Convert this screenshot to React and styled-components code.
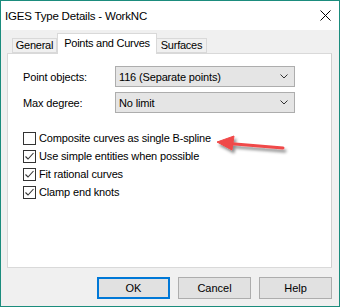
import React from 'react';
import styled, { createGlobalStyle } from 'styled-components';

//----------------Styling-------------------------//

const Global = createGlobalStyle`
  body {
    margin: 0;
    font-family: "Liberation Sans", Arial, sans-serif;
    font-size: 11px;
    color: #000;
  }
`

const Window = styled.div`
  position: relative;
  width: 340px;
  height: 307px;
  box-sizing: border-box;
  border: 1px solid #1b8c7d;
  background: #f0f0f0;
  display: flex;
  flex-direction: column;
`

const TitleBar = styled.div`
  height: 29px;
  background: #fff;
  display: flex;
  align-items: center;
  justify-content: space-between;
  padding: 0 8px 0 4px;
  font-size: 11.5px;
  letter-spacing: -0.2px;
`

const Body = styled.div`
  flex: 1;
  display: flex;
  flex-direction: column;
  padding: 3px 7px 0 6px;
`

const TabStrip = styled.div`
  display: flex;
  align-items: flex-end;
  height: 20px;
  padding-left: 5px;
  position: relative;
  z-index: 1;
`

const Tab = styled.div`
  width: ${p => p.w}px;
  height: ${p => (p.active ? 21 : 15)}px;
  box-sizing: border-box;
  border: 1px solid #d9d9d9;
  border-bottom: ${p => (p.active ? 'none' : '1px solid #d9d9d9')};
  border-left: ${p => (p.noLeft ? 'none' : '1px solid #d9d9d9')};
  background: ${p => (p.active ? '#fff' : '#f0f0f0')};
  margin-bottom: ${p => (p.active ? -1 : 0)}px;
  display: flex;
  align-items: center;
  justify-content: center;
  padding-bottom: ${p => (p.active ? 3 : 1)}px;
  letter-spacing: -0.25px;
  white-space: nowrap;
`

const Panel = styled.div`
  height: 215px;
  box-sizing: border-box;
  border: 1px solid #d9d9d9;
  border-right-color: #cfcfcf;
  background: #fff;
  padding: 12px 0 0 15px;
  display: flex;
  flex-direction: column;
  letter-spacing: -0.15px;
`

const FieldRow = styled.div`
  display: flex;
  align-items: center;
  height: 21px;
  margin-bottom: 5px;
`

const Label = styled.div`
  width: 92px;
`

const Combo = styled.div`
  width: 180px;
  height: 21px;
  box-sizing: border-box;
  border: 1px solid #adadad;
  background: #e5e5e5;
  display: flex;
  align-items: center;
  justify-content: space-between;
  padding: 0 6px 0 3px;
`

const Checks = styled.div`
  margin-top: 11px;
  display: flex;
  flex-direction: column;
`

const CheckRow = styled.div`
  display: flex;
  align-items: center;
  height: 18px;
`

const Box = styled.div`
  width: 13px;
  height: 13px;
  box-sizing: border-box;
  border: 1px solid #333;
  background: #fff;
  margin-right: 3px;
  display: flex;
`

const Buttons = styled.div`
  display: flex;
  justify-content: flex-end;
  gap: 8px;
  margin-top: 9px;
`

const Button = styled.div`
  width: 73px;
  height: 22px;
  box-sizing: border-box;
  border: ${p => (p.primary ? '2px solid #0078d7' : '1px solid #adadad')};
  background: #e1e1e1;
  display: flex;
  align-items: center;
  justify-content: center;
`

const Pointer = styled.svg`
  position: absolute;
  left: 204px;
  top: 127px;
  overflow: visible;
`

//-------------Component Function-----------------//

const Chevron = () => (
  <svg width="8" height="5" viewBox="0 0 8 5">
    <polyline points="0.5,0.5 4,4 7.5,0.5" fill="none" stroke="#333" strokeWidth="1" />
  </svg>
)

const Check = ({ on, label }) => (
  <CheckRow>
    <Box>
      {on && (
        <svg width="11" height="11" viewBox="0 0 11 11">
          <polyline points="1.5,5.5 4,8 9.5,2" fill="none" stroke="#333" strokeWidth="1.1" />
        </svg>
      )}
    </Box>
    {label}
  </CheckRow>
)

const App = () => {
  return (
    <Window>
      <Global />
      <TitleBar>
        IGES Type Details - WorkNC
        <svg width="11" height="11" viewBox="0 0 11 11">
          <path d="M0.5 0.5 L10.5 10.5 M10.5 0.5 L0.5 10.5" stroke="#000" strokeWidth="1" />
        </svg>
      </TitleBar>
      <Body>
        <TabStrip>
          <Tab w={45}>General</Tab>
          <Tab w={100} active>Points and Curves</Tab>
          <Tab w={50} noLeft>Surfaces</Tab>
        </TabStrip>
        <Panel>
          <FieldRow>
            <Label>Point objects:</Label>
            <Combo>116 (Separate points)<Chevron /></Combo>
          </FieldRow>
          <FieldRow>
            <Label>Max degree:</Label>
            <Combo>No limit<Chevron /></Combo>
          </FieldRow>
          <Checks>
            <Check label="Composite curves as single B-spline" />
            <Check on label="Use simple entities when possible" />
            <Check on label="Fit rational curves" />
            <Check on label="Clamp end knots" />
          </Checks>
        </Panel>
        <Buttons>
          <Button primary>OK</Button>
          <Button>Cancel</Button>
          <Button>Help</Button>
        </Buttons>
      </Body>
      <Pointer width="90" height="30" viewBox="0 0 90 30">
        <defs>
          <filter id="sh" x="-20%" y="-50%" width="140%" height="200%">
            <feDropShadow dx="2" dy="3" stdDeviation="1.6" floodColor="#000" floodOpacity="0.45" />
          </filter>
        </defs>
        <g filter="url(#sh)" fill="#f04848" stroke="#f04848">
          <line x1="24" y1="15.5" x2="78" y2="20" strokeWidth="3" strokeLinecap="round" />
          <polygon points="12,14 29,8 27,22" strokeWidth="1" strokeLinejoin="round" />
        </g>
      </Pointer>
    </Window>
  )
}

export default App
